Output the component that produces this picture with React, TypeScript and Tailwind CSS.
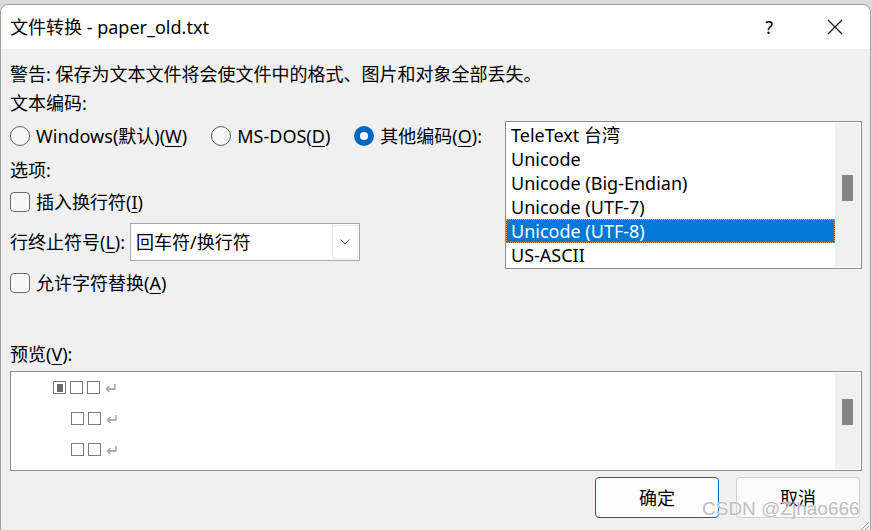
import React from 'react';

const encodings = [
    'TeleText 台湾',
    'Unicode',
    'Unicode (Big-Endian)',
    'Unicode (UTF-7)',
    'Unicode (UTF-8)',
    'US-ASCII',
];

function Radio({ checked, label, hotkey, suffix }: { checked?: boolean; label: string; hotkey: string; suffix?: string }) {
    return (
        <div className="flex items-center gap-[6px]">
            {checked ? (
                <span className="flex h-[20px] w-[20px] items-center justify-center rounded-full bg-[#0067c0]">
                    <span className="h-[8px] w-[8px] rounded-full bg-white" />
                </span>
            ) : (
                <span className="h-[20px] w-[20px] rounded-full border border-[#5d5d5d] bg-[#f7f7f7]" />
            )}
            <span>
                {label}(<span className="underline underline-offset-[3px]">{hotkey}</span>){suffix}
            </span>
        </div>
    );
}

function Checkbox({ label, hotkey }: { label: string; hotkey: string }) {
    return (
        <div className="flex items-center gap-[6px]">
            <span className="h-[20px] w-[20px] rounded-[4px] border border-[#6b6b6b] bg-[#f7f7f7]" />
            <span>
                {label}(<span className="underline underline-offset-[3px]">{hotkey}</span>)
            </span>
        </div>
    );
}

function ScrollTrack({ thumbTop }: { thumbTop: number }) {
    return (
        <div className="relative h-full w-[25px] bg-[#f0f0f0]">
            <div className="absolute left-[7px] h-[26px] w-[11px] bg-[#858585]" style={{ top: thumbTop }} />
        </div>
    );
}

function Tofu({ cursor }: { cursor?: boolean }) {
    return (
        <span className="flex h-[13px] w-[13px] items-center justify-center border border-[#7a7a7a] bg-white">
            {cursor && <span className="h-[8px] w-[6px] bg-[#6a6a6a]" />}
        </span>
    );
}

function PreviewLine({ indent, count, cursor }: { indent: number; count: number; cursor?: boolean }) {
    return (
        <div className="flex h-[31px] items-center gap-[4px]" style={{ paddingLeft: indent }}>
            {Array.from({ length: count }).map((_, i) => (
                <Tofu key={i} cursor={cursor && i === 0} />
            ))}
            <span className="ml-[1px] text-[16px] leading-none text-[#a0a0a0]">↵</span>
        </div>
    );
}

export default function App() {
    return (
        <div className="h-[530px] w-[872px] overflow-hidden bg-[#dadada] pt-[4px] pr-[1px] font-['Noto_Sans','Noto_Sans_CJK_SC',sans-serif] text-[18px] leading-[24px] text-black">
            <div className="relative h-[530px] w-[871px] rounded-t-[8px] border border-[#a0a0a0] bg-[#f0f0f0]">
                {/* title bar */}
                <div className="flex h-[44px] items-center rounded-t-[8px] bg-white pl-[9px]">
                    <span>文件转换 - paper_old.txt</span>
                    <span className="ml-auto mr-[54px]">?</span>
                    <svg width="16" height="16" viewBox="0 0 16 16" className="mr-[27px]">
                        <path d="M1 1 L15 15 M15 1 L1 15" stroke="#1a1a1a" strokeWidth="1.3" />
                    </svg>
                </div>

                <div className="pl-[9px]">
                    <div className="mt-[13px] flex h-[24px] items-center">警告: 保存为文本文件将会使文件中的格式、图片和对象全部丢失。</div>
                    <div className="mt-[5px] flex h-[24px] items-center">文本编码:</div>

                    <div className="mt-[6px] flex">
                        <div className="w-[495px]">
                            <div className="mt-[3px] flex h-[24px] items-center gap-[24px]">
                                <Radio label="Windows(默认)" hotkey="W" />
                                <Radio label="MS-DOS" hotkey="D" />
                                <Radio checked label="其他编码" hotkey="O" suffix=":" />
                            </div>
                            <div className="mt-[10px] flex h-[24px] items-center">选项:</div>
                            <div className="mt-[8px] flex h-[24px] items-center">
                                <Checkbox label="插入换行符" hotkey="I" />
                            </div>
                            <div className="mt-[9px] flex h-[38px] items-center">
                                <span className="w-[120px]">
                                    行终止符号(<span className="underline underline-offset-[3px]">L</span>):
                                </span>
                                <div className="flex h-[38px] w-[230px] items-center border border-[#a8a8a8] bg-white pl-[5px] pr-[1px]">
                                    <span className="flex-1">回车符/换行符</span>
                                    <div className="flex h-[34px] w-[26px] items-center justify-center border border-[#ececec] bg-white">
                                        <svg width="10" height="6" viewBox="0 0 10 6">
                                            <path d="M0.5 0.5 L5 5 L9.5 0.5" fill="none" stroke="#606060" strokeWidth="1" />
                                        </svg>
                                    </div>
                                </div>
                            </div>
                            <div className="mt-[10px] flex h-[24px] items-center">
                                <Checkbox label="允许字符替换" hotkey="A" />
                            </div>
                        </div>

                        {/* encoding list */}
                        <div className="flex h-[148px] w-[357px] border border-[#8a8e92] bg-white">
                            <div className="flex-1 pt-[1px]">
                                {encodings.map((e) => (
                                    <div
                                        key={e}
                                        className={
                                            e === 'Unicode (UTF-8)'
                                                ? 'flex h-[24px] items-center border border-dotted border-[#e8a060] bg-[#0078d7] pl-[4px] text-white'
                                                : 'flex h-[24px] items-center pl-[5px]'
                                        }
                                    >
                                        {e}
                                    </div>
                                ))}
                            </div>
                            <div className="py-[1px] pr-[1px]">
                                <ScrollTrack thumbTop={52} />
                            </div>
                        </div>
                    </div>

                    <div className="mt-[47px] flex h-[24px] items-center">
                        预览(<span className="underline underline-offset-[3px]">V</span>):
                    </div>

                    <div className="mt-[5px] flex h-[100px] w-[852px] border border-[#8a8e92] bg-white">
                        <div className="flex-1">
                            <PreviewLine indent={42} count={3} cursor />
                            <PreviewLine indent={60} count={2} />
                            <PreviewLine indent={60} count={2} />
                        </div>
                        <div className="py-[1px] pr-[1px]">
                            <ScrollTrack thumbTop={26} />
                        </div>
                    </div>

                    <div className="mt-[6px] flex justify-end gap-[17px] pr-[10px]">
                        <button className="h-[41px] w-[124px] rounded-[4px] border border-[#0067c0] bg-[#fdfdfd]">确定</button>
                        <button className="h-[41px] w-[124px] rounded-[4px] border border-[#d0d0d0] bg-[#fbfbfb]">取消</button>
                    </div>
                </div>

                {/* resize grip */}
                <svg width="12" height="12" viewBox="0 0 12 12" className="absolute right-[0px] top-[514px]">
                    <path d="M11 3 L3 11 M11 7 L7 11" stroke="#9a9a9a" strokeWidth="1" />
                </svg>
            </div>

            {/* watermark */}
            <div className="pointer-events-none absolute left-[702px] top-[497px] font-['Liberation_Sans',sans-serif] text-[19px] leading-[24px] text-[#bdbdbd] [text-shadow:0_0_2px_#ffffff]">
                CSDN @Zjhao666
            </div>
        </div>
    );
}
